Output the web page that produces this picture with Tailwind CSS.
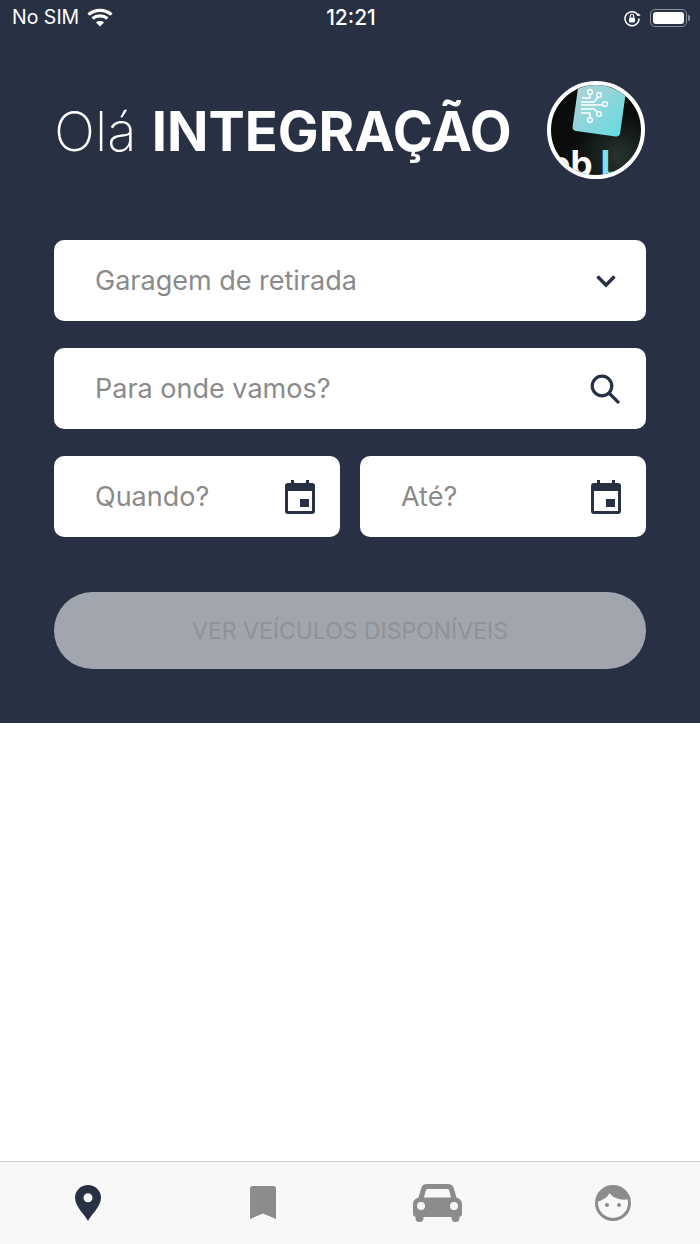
<!DOCTYPE html>
<html lang="pt-BR">

<head>
    <meta charset="UTF-8">
    <meta name="viewport" content="width=device-width, initial-scale=1.0">
    <title>Início</title>
    <script src="https://cdn.jsdelivr.net/npm/@tailwindcss/browser@4"></script>
</head>

<body class="bg-white font-['Inter',sans-serif]">
    <div class="w-[700px] h-[1244px] flex flex-col overflow-hidden">
        <!-- topo azul -->
        <div class="h-[723px] bg-[#283044] flex flex-col">
            <!-- status bar -->
            <div class="h-[36px] pl-[12px] pr-[10px] grid grid-cols-3 items-center text-white">
                <div class="flex items-center gap-[8px] text-[19.5px]">
                    <span>No SIM</span>
                    <svg class="w-[26px] h-[19px] -mt-[2px]" viewBox="0 0 26 19" fill="none" stroke="#fff" stroke-width="3.2">
                        <path d="M1.5 6.6C7.800 1 18.200 1 24.500 6.600" />
                        <path d="M5.500 10.600C9.800 7 16.200 7 20.500 10.600" />
                        <path d="M13 18.500 9 14.400C11.200 12.600 14.800 12.600 17 14.400Z" fill="#fff" stroke="none" />
                    </svg>
                </div>
                <div class="text-center font-medium text-[21px]">12:21</div>
                <div class="flex items-center justify-end gap-[9px]">
                    <svg class="w-[17px] h-[17px]" viewBox="0 0 17 17" fill="none">
                        <path d="M14.200 5.400A7 7 0 1 0 15 8.500" stroke="#fff" stroke-width="1.500" />
                        <path d="M12.600 5.800h4l-2-2.600z" fill="#fff" />
                        <rect x="5" y="7.600" width="6" height="5" rx="1" fill="#fff" />
                        <path d="M6.300 7.600V6a1.700 1.700 0 0 1 3.400 0v1.600" stroke="#fff" stroke-width="1.100" />
                    </svg>
                    <div class="flex items-center gap-[1px]">
                        <div class="w-[37px] h-[18px] rounded-[5px] border border-[#8a8f9b] p-[2px]">
                            <div class="w-full h-full bg-white rounded-[3px]"></div>
                        </div>
                        <div class="w-[2px] h-[6px] rounded-r-full bg-[#8a8f9b]"></div>
                    </div>
                </div>
            </div>

            <!-- saudacao -->
            <div class="mt-[45px] h-[98px] pl-[55px] pr-[55px] flex items-center justify-between">
                <h1 class="text-[54.4px] leading-[100px] h-[98px] -ml-[1px] text-white font-extralight whitespace-nowrap">Olá <b class="font-bold">INTEGRAÇÃO</b></h1>
                <div class="relative w-[98px] h-[98px] rounded-full border-[4px] border-white bg-[radial-gradient(circle_at_75%_80%,#26342f,#0b0d0d_45%)] overflow-hidden shrink-0">
                    <div class="absolute left-[25px] top-[-11px] w-[48px] h-[60px] rounded-[4px] bg-gradient-to-br from-[#b4cfd2] to-[#5fdbe2] rotate-[8deg]"></div>
                    <svg class="absolute left-[27px] top-[4px] w-[34px] h-[38px]" viewBox="0 0 34 38" fill="none" stroke="#fff" stroke-width="1.400">
                        <circle cx="12" cy="3" r="2.400" />
                        <circle cx="21" cy="6" r="2.400" />
                        <circle cx="27" cy="15" r="2.400" />
                        <circle cx="21" cy="25" r="2.400" />
                        <circle cx="12" cy="31" r="2.400" />
                        <path d="M4 9h8V5M3 13h13l4-5M3 16h21M3 20h13l4 4M3 24h9v5" />
                    </svg>
                    <span class="absolute left-[-2px] top-[58px] text-[35px] leading-[40px] font-bold text-white whitespace-nowrap">ob<span class="ml-[8px] text-[#7fe3ec]">L</span></span>
                </div>
            </div>

            <!-- formulario -->
            <form class="mt-[61px] px-[54px] flex flex-col gap-[27px]">
                <div class="h-[81px] bg-white rounded-[10px] pl-[41px] pr-[29px] pt-[1px] flex items-center justify-between">
                    <span class="text-[27px] text-[#8a8a8a]">Garagem de retirada</span>
                    <svg class="w-[22px] h-[14px]" viewBox="0 0 22 14" fill="none" stroke="#283044" stroke-width="3.400">
                        <path d="M2.500 2.500 11 11l8.500-8.500" />
                    </svg>
                </div>
                <div class="h-[81px] bg-white rounded-[10px] pl-[41px] pr-[26px] pt-[1px] flex items-center justify-between">
                    <span class="text-[27px] text-[#8a8a8a]">Para onde vamos?</span>
                    <svg class="w-[30px] h-[30px]" viewBox="0 0 30 30" fill="none" stroke="#283044" stroke-width="3.200">
                        <circle cx="12" cy="12" r="9.800" />
                        <path d="m19 19 10 10" />
                    </svg>
                </div>
                <div class="grid grid-cols-2 gap-[20px]">
                    <div class="h-[81px] bg-white rounded-[10px] pl-[41px] pr-[25px] pt-[1px] flex items-center justify-between">
                        <span class="text-[27px] text-[#8a8a8a]">Quando?</span>
                        <svg class="w-[30px] h-[34px]" viewBox="0 0 30 34" fill="#283044">
                            <path fill-rule="evenodd" d="M6 0h3v3h12V0h3v3h3a3 3 0 0 1 3 3v25a3 3 0 0 1-3 3H3a3 3 0 0 1-3-3V6a3 3 0 0 1 3-3h3zM3 11v20h24V11z" />
                            <rect x="15" y="19" width="9" height="8" />
                        </svg>
                    </div>
                    <div class="h-[81px] bg-white rounded-[10px] pl-[41px] pr-[25px] pt-[1px] flex items-center justify-between">
                        <span class="text-[27px] text-[#8a8a8a]">Até?</span>
                        <svg class="w-[30px] h-[34px]" viewBox="0 0 30 34" fill="#283044">
                            <path fill-rule="evenodd" d="M6 0h3v3h12V0h3v3h3a3 3 0 0 1 3 3v25a3 3 0 0 1-3 3H3a3 3 0 0 1-3-3V6a3 3 0 0 1 3-3h3zM3 11v20h24V11z" />
                            <rect x="15" y="19" width="9" height="8" />
                        </svg>
                    </div>
                </div>
                <button type="button" disabled class="mt-[28px] h-[77px] rounded-full bg-[#a1a5ae] text-[#8f9298] text-[23px] pt-[2px] flex items-center justify-center">VER VEÍCULOS DISPONÍVEIS</button>
            </form>
        </div>

        <div class="flex-1 bg-white"></div>

        <!-- tab bar -->
        <nav class="h-[83px] bg-[#f8f8f8] border-t border-[#cfcfcf] grid grid-cols-4 items-center justify-items-center pb-[1px]">
            <svg class="w-[26px] h-[36px]" viewBox="0 0 26 36" fill="#283044">
                <path fill-rule="evenodd" d="M13 36C11 31 0 22 0 12.800A13 12.800 0 0 1 26 12.800C26 22 15 31 13 36ZM13 17.300a4.500 4.500 0 1 0 0-9 4.500 4.500 0 0 0 0 9Z" />
            </svg>
            <svg class="w-[26px] h-[33px]" viewBox="0 0 26 33" fill="#8c8c8c">
                <path d="M2.500 0h21A2.500 2.500 0 0 1 26 2.500V33l-13-5.500L0 33V2.500A2.500 2.500 0 0 1 2.500 0Z" />
            </svg>
            <svg class="w-[49px] h-[38px]" viewBox="0 0 49 38" fill="#8c8c8c">
                <path fill-rule="evenodd" d="M14 0h21c3 0 5 1.600 5.800 4.200l2.700 9.300C47 14.500 49 17 49 20v10c0 1.500-1 2.600-2.500 2.800V34a4 4 0 0 1-8 0v-1h-28v1a4 4 0 0 1-8 0v-1.200C1 32.600 0 31.500 0 30V20c0-3 2-5.500 5.500-6.500l2.700-9.300C9 1.600 11 0 14 0ZM14.800 5c-1 0-1.700.5-2 1.500l-1.800 7h27l-1.800-7c-.3-1-1-1.500-2-1.500ZM8 18a4 4 0 1 0 0 8 4 4 0 0 0 0-8Zm33 0a4 4 0 1 0 0 8 4 4 0 0 0 0-8Z" />
            </svg>
            <svg class="w-[36px] h-[36px]" viewBox="0 0 36 36" fill="#8c8c8c">
                <path fill-rule="evenodd" d="M18 0a18 18 0 1 1 0 36 18 18 0 0 1 0-36ZM3 18a15 15 0 0 0 30 0c0-1.300-.2-2.500-.5-3.700-3 .8-7.500.4-11.500-1.300-3-1.300-5-3-6.500-5-1.500 3.500-5 6.500-11.500 8.500Z" />
                <circle cx="12" cy="20" r="2" />
                <circle cx="24" cy="20" r="2" />
            </svg>
        </nav>
    </div>
</body>

</html>
